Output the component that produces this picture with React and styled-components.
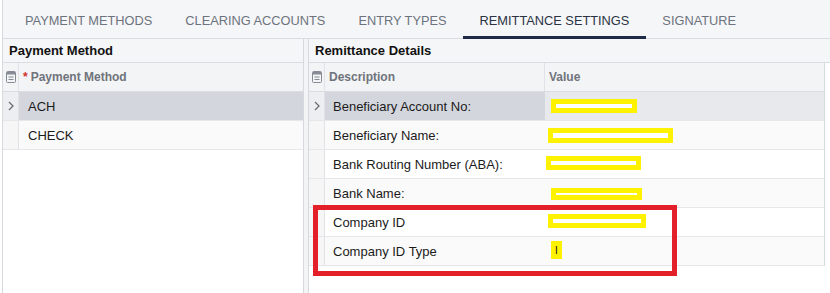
import React from "react";
import styled, { createGlobalStyle } from "styled-components";

const Global = createGlobalStyle`
  html, body { margin: 0; padding: 0; background: #ffffff; }
  body { font-family: "Liberation Sans", Arial, sans-serif; }
  * { box-sizing: border-box; }
`;

const Page = styled.div`
  position: relative;
  width: 830px;
  height: 293px;
  overflow: hidden;
  background: #ffffff;
  padding-left: 2px;
`;

const Frame = styled.div`
  height: 100%;
  border-left: 1px solid #d6d9de;
  display: flex;
  flex-direction: column;
`;

const TabBar = styled.div`
  display: flex;
  height: 39px;
  flex: none;
  background: #f5f6f8;
  box-shadow: inset 0 -1px 0 #d9dce1;
  padding-left: 5.5px;
`;

const Tab = styled.div`
  height: 39px;
  padding: 4px 16.5px 0;
  display: flex;
  align-items: center;
  font-size: 12.8px;
  text-transform: uppercase;
  white-space: nowrap;
  color: ${(p) => (p.$active ? "#2b3343" : "#6d737d")};
  border-bottom: 3px solid ${(p) => (p.$active ? "#1f2b46" : "transparent")};
`;

const Body = styled.div`
  flex: 1;
  display: flex;
  min-height: 0;
`;

const Panel = styled.div`
  display: flex;
  flex-direction: column;
  width: ${(p) => p.$width};
  flex: ${(p) => (p.$grow ? 1 : "none")};
  border-right: ${(p) => (p.$right ? "1px solid #d6d9de" : "none")};
  border-left: ${(p) => (p.$left ? "1px solid #d6d9de" : "none")};
  background: #ffffff;
`;

const Splitter = styled.div`
  width: 4px;
  flex: none;
  background: #f3f4f6;
`;

const PanelHeader = styled.div`
  height: 24px;
  flex: none;
  background: #f5f6f8;
  border-bottom: 1px solid #d9dce1;
  padding-left: 6px;
  font-size: 13px;
  font-weight: bold;
  color: #111111;
  line-height: 23px;
`;

const GridWrap = styled.div`
  width: ${(p) => p.$width};
  border-right: ${(p) => (p.$bordered ? "1px solid #d6d9de" : "none")};
`;

const Row = styled.div`
  display: grid;
  grid-template-columns: ${(p) => p.$cols};
  height: 29px;
  border-bottom: 1px solid ${(p) => (p.$header ? "#d9dce1" : "#e6e7ea")};
  background: ${(p) => (p.$header ? "#f3f4f6" : p.$alt ? "#fafafa" : "#ffffff")};
`;

const IconCell = styled.div`
  display: flex;
  align-items: center;
  justify-content: center;
  border-right: 1px solid #e0e2e6;
  background: ${(p) => (p.$header ? "#f3f4f6" : p.$sel ? "#eceef1" : "#f6f6f7")};
`;

const HeadCell = styled.div`
  display: flex;
  align-items: center;
  padding-left: 4px;
  font-size: 12px;
  font-weight: bold;
  color: #6f737b;
  white-space: nowrap;
  border-right: ${(p) => (p.$sep ? "1px solid #e0e2e6" : "none")};
`;

const Req = styled.span`
  color: #d0312d;
  margin-right: 3px;
`;

const Cell = styled.div`
  display: flex;
  align-items: center;
  padding-left: ${(p) => p.$pad || "9px"};
  font-size: 13px;
  color: #1b1b1b;
  white-space: nowrap;
  background: ${(p) => p.$bg || "transparent"};
`;

const Redact = styled.span`
  display: block;
  width: ${(p) => p.$w}px;
  height: ${(p) => p.$h}px;
  margin-left: ${(p) => p.$dx}px;
  transform: translateY(${(p) => p.$dy}px);
  border: 5px solid #fff200;
  background: #ffffff;
`;

const RedactMark = styled.span`
  display: flex;
  align-items: center;
  justify-content: center;
  width: ${(p) => p.$w}px;
  height: ${(p) => p.$h}px;
  margin-left: ${(p) => p.$dx}px;
  transform: translateY(${(p) => p.$dy}px);
  background: #fff200;
  font-size: 10px;
  color: #111;
`;

const Highlight = styled.div`
  position: absolute;
  left: 313px;
  top: 205px;
  width: 364px;
  height: 71px;
  border: 5px solid #e3202a;
  pointer-events: none;
`;

const ColumnsIcon = () => (
  <svg width="10" height="12" viewBox="0 0 10 12">
    <rect x="0.5" y="0.5" width="9" height="11" rx="1" fill="none" stroke="#868b94" />
    <rect x="1" y="1" width="8" height="2.5" fill="#868b94" />
    <line x1="2.5" y1="6" x2="7.5" y2="6" stroke="#868b94" />
    <line x1="2.5" y1="8.5" x2="7.5" y2="8.5" stroke="#868b94" />
  </svg>
);

const Chevron = () => (
  <svg width="6" height="10" viewBox="0 0 6 10">
    <polyline points="1,1 5,5 1,9" fill="none" stroke="#6a6e75" strokeWidth="1.3" />
  </svg>
);

const tabs = ["Payment Methods", "Clearing Accounts", "Entry Types", "Remittance Settings", "Signature"];

const methods = ["ACH", "CHECK"];

const details = [
  { label: "Beneficiary Account No:", r: { w: 86, h: 14, dx: 2, dy: 0 } },
  { label: "Beneficiary Name:", r: { w: 125, h: 15, dx: -1, dy: 0 } },
  { label: "Bank Routing Number (ABA):", r: { w: 95, h: 14, dx: -3, dy: -1 } },
  { label: "Bank Name:", r: { w: 91, h: 12, dx: 2, dy: 1 } },
  { label: "Company ID", r: { w: 98, h: 14, dx: -1, dy: -1 } },
  { label: "Company ID Type", mark: true, r: { w: 11, h: 18, dx: 2, dy: -1 } },
];

const LEFT_COLS = "16px 1fr";
const RIGHT_COLS = "16px 220px 1fr";

export default function App() {
  return (
    <>
      <Global />
      <Page>
        <Frame>
          <TabBar>
            {tabs.map((t, i) => (
              <Tab key={t} $active={i === 3}>{t}</Tab>
            ))}
          </TabBar>
          <Body>
            <Panel $width="301px" $right>
              <PanelHeader>Payment Method</PanelHeader>
              <GridWrap $width="100%">
                <Row $header $cols={LEFT_COLS}>
                  <IconCell $header><ColumnsIcon /></IconCell>
                  <HeadCell><Req>*</Req>Payment Method</HeadCell>
                </Row>
                {methods.map((m, i) => (
                  <Row key={m} $cols={LEFT_COLS} $alt={i % 2 === 1}>
                    <IconCell $sel={i === 0}>{i === 0 && <Chevron />}</IconCell>
                    <Cell $bg={i === 0 ? "#d3d6dd" : undefined}>{m}</Cell>
                  </Row>
                ))}
              </GridWrap>
            </Panel>
            <Splitter />
            <Panel $grow $left>
              <PanelHeader>Remittance Details</PanelHeader>
              <GridWrap $width="516px" $bordered>
                <Row $header $cols={RIGHT_COLS}>
                  <IconCell $header><ColumnsIcon /></IconCell>
                  <HeadCell $sep>Description</HeadCell>
                  <HeadCell>Value</HeadCell>
                </Row>
                {details.map((d, i) => (
                  <Row key={d.label} $cols={RIGHT_COLS} $alt={i % 2 === 1}>
                    <IconCell $sel={i === 0}>{i === 0 && <Chevron />}</IconCell>
                    <Cell $pad="8px" $bg={i === 0 ? "#d3d6dd" : undefined}>{d.label}</Cell>
                    <Cell $pad="4px" $bg={i === 0 ? "#e8e9ed" : undefined}>
                      {d.mark ? (
                        <RedactMark $w={d.r.w} $h={d.r.h} $dx={d.r.dx} $dy={d.r.dy}>I</RedactMark>
                      ) : (
                        <Redact $w={d.r.w} $h={d.r.h} $dx={d.r.dx} $dy={d.r.dy} />
                      )}
                    </Cell>
                  </Row>
                ))}
              </GridWrap>
            </Panel>
          </Body>
        </Frame>
        <Highlight />
      </Page>
    </>
  );
}
